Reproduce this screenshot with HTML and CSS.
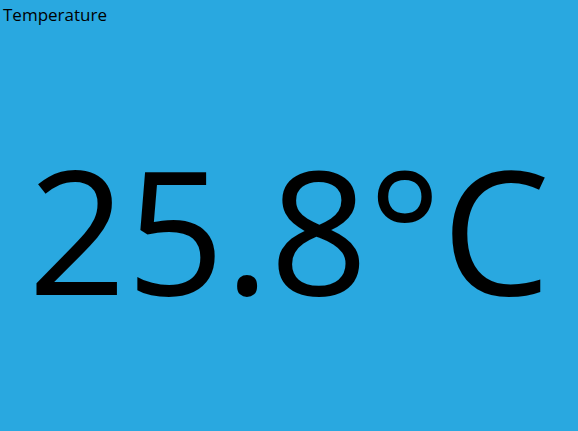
FILE: index.html
```html
<!DOCTYPE html>
<html>
<head>
<meta charset="utf-8">
<link rel="stylesheet" href="styles.css">
</head>
<body>
<div class="widget">
  <div class="label">Temperature</div>
  <div class="value">25.8°C</div>
</div>
</body>
</html>
```
FILE: styles.css
```css
html, body {
  margin: 0;
  padding: 0;
  height: 100%;
}
body {
  background: #29a8e0;
  font-family: "Open Sans", sans-serif;
  color: #000;
}
.widget {
  display: flex;
  flex-direction: column;
  height: 100%;
}
.label {
  font-size: 17px;
  line-height: 20px;
  padding: 5px 0 0 3px;
}
.value {
  flex: 1;
  display: flex;
  align-items: center;
  justify-content: center;
  font-size: 172px;
  line-height: 1;
}
```
